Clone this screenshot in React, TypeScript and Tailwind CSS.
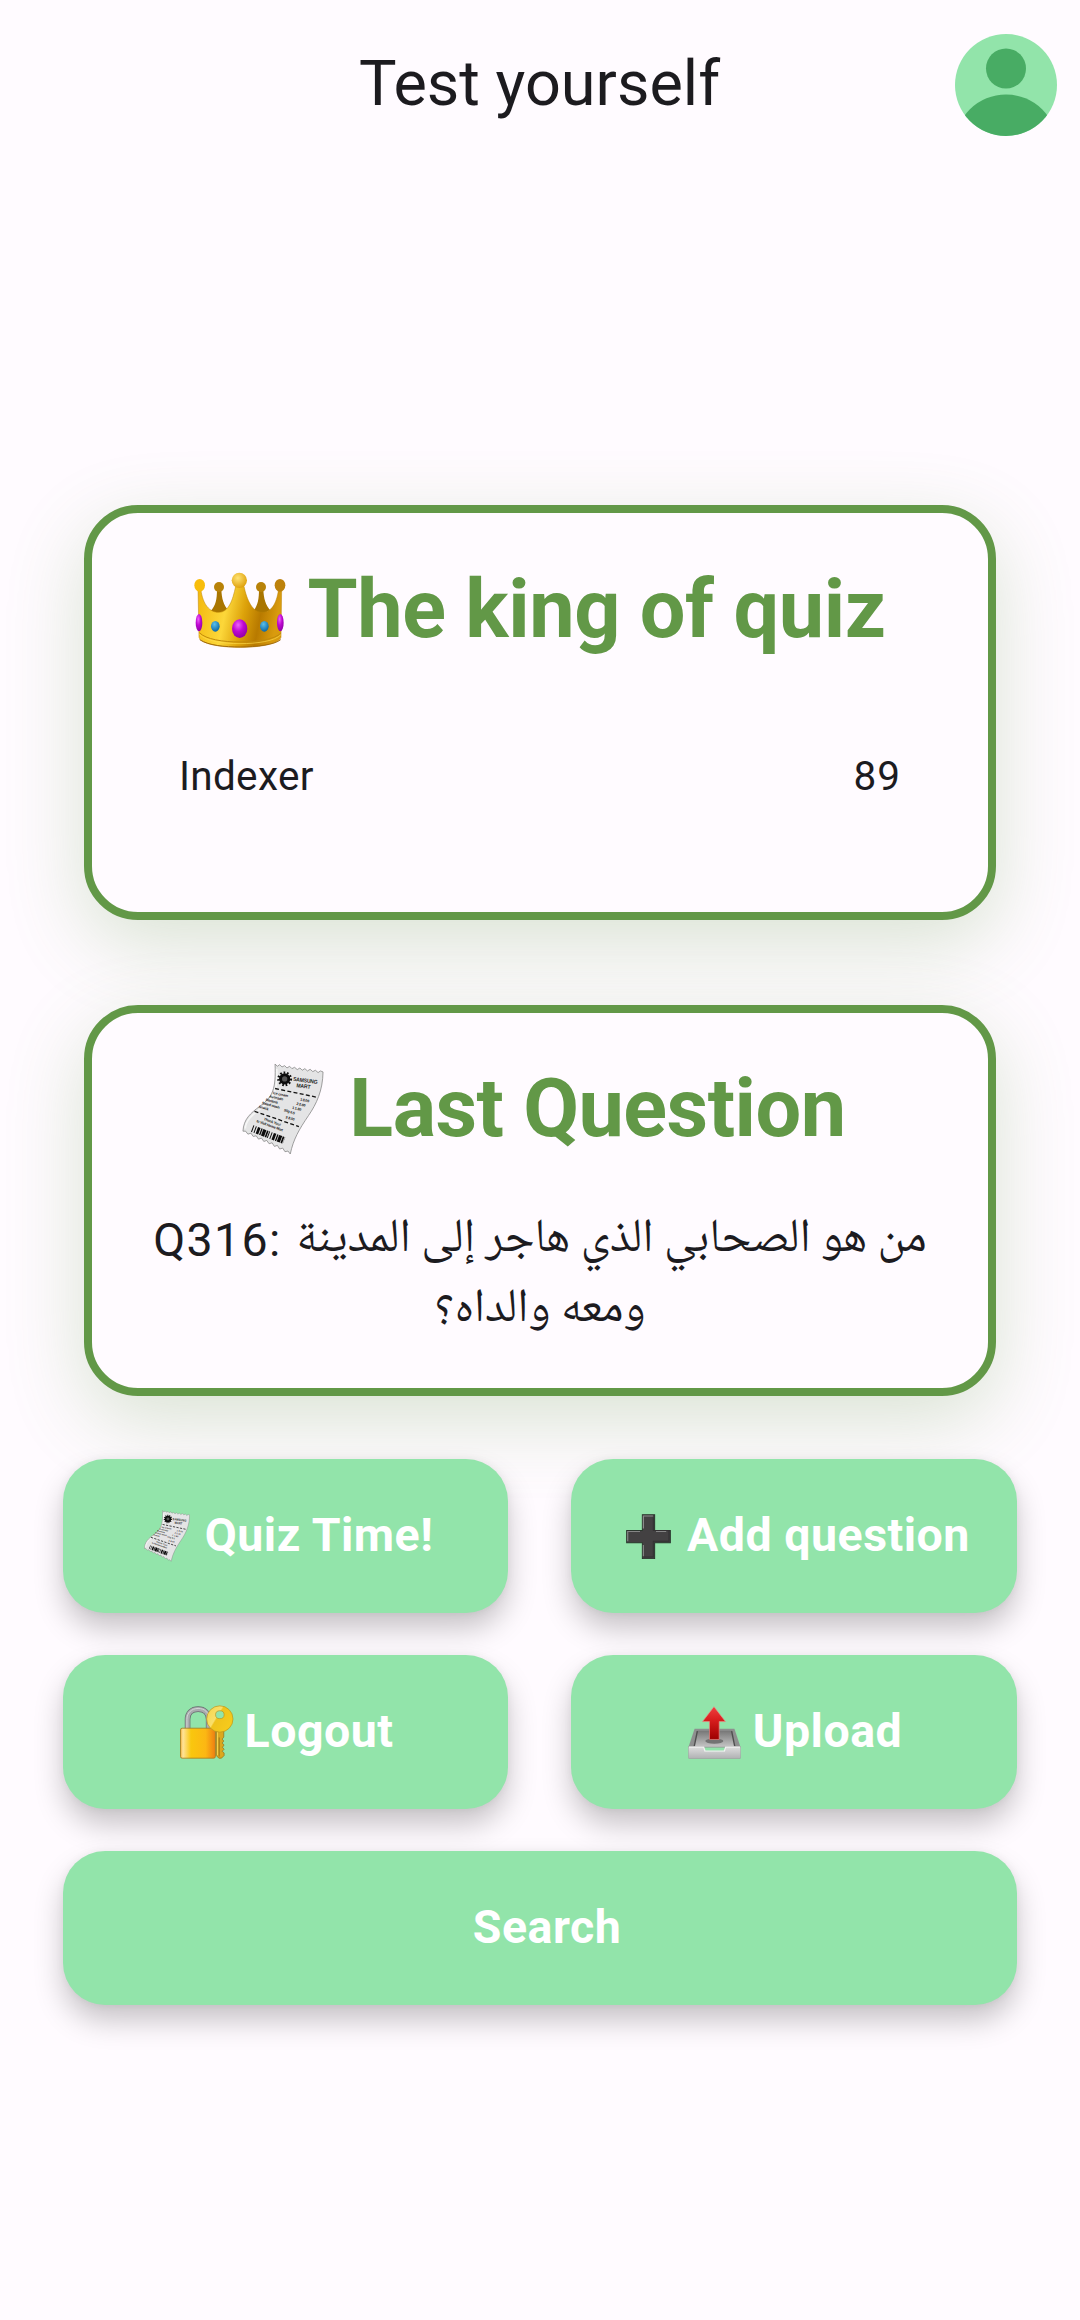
import type { ReactNode } from 'react';

function Avatar() {
  return (
    <svg viewBox="0 0 102 102" className="h-[102px] w-[102px]">
      <defs>
        <clipPath id="avatar-clip">
          <circle cx="51" cy="51" r="51" />
        </clipPath>
      </defs>
      <circle cx="51" cy="51" r="51" fill="#92e4aa" />
      <g clipPath="url(#avatar-clip)" fill="#48ac64">
        <circle cx="51" cy="34.5" r="20" />
        <ellipse cx="51" cy="111" rx="51" ry="50.5" />
      </g>
    </svg>
  );
}

function Crown() {
  return (
    <svg viewBox="47 66 276 228" className="h-[76px] w-[92px] shrink-0">
      <defs>
        <linearGradient id="crown-body" x1="0" y1="0" x2="1" y2="0.15">
          <stop offset="0" stopColor="#f3b70c" />
          <stop offset="0.38" stopColor="#fcd73a" />
          <stop offset="0.6" stopColor="#dda20a" />
          <stop offset="0.8" stopColor="#b87a00" />
          <stop offset="1" stopColor="#d99b0e" />
        </linearGradient>
        <radialGradient id="crown-ball" cx="0.4" cy="0.35" r="0.7">
          <stop offset="0" stopColor="#ffe374" />
          <stop offset="1" stopColor="#dd9d06" />
        </radialGradient>
        <radialGradient id="crown-purple" cx="0.4" cy="0.3" r="0.7">
          <stop offset="0" stopColor="#ef62fb" />
          <stop offset="0.5" stopColor="#be08d2" />
          <stop offset="1" stopColor="#9300a8" />
        </radialGradient>
        <radialGradient id="crown-blue" cx="0.4" cy="0.3" r="0.7">
          <stop offset="0" stopColor="#5cc0e8" />
          <stop offset="1" stopColor="#0b68a8" />
        </radialGradient>
      </defs>
      <path d="M116 118h13c1 28 7 48 20 62l-24 14-28-11c15-15 19-35 19-65ZM242 118h13c1 28 7 48 20 62l-22 14-28-11c13-15 17-35 17-65Z" fill="#a97500" />
      <circle cx="122" cy="111" r="15" fill="#b88209" />
      <circle cx="248" cy="111" r="15" fill="#b88209" />
      <path d="M59 114h8c4 38 20 73 54 73 30 0 42-36 51-78h25c9 42 25 78 55 78 31 0 45-35 49-73h9l-2 148c-6 19-57 30-123 30-65 0-117-11-123-30Z" fill="url(#crown-body)" stroke="#bb8205" strokeWidth="1.5" />
      <path d="M63 248c20 20 70 28 122 28s105-8 123-27" fill="none" stroke="#c18a0a" strokeWidth="3" />
      <path d="M63 253c20 20 70 28 122 28s105-8 123-27" fill="none" stroke="#ffdc4c" strokeWidth="2" />
      <path d="M64 269c25 17 75 22 122 22s103-7 121-22" fill="none" stroke="#a36b0a" strokeWidth="3" />
      <ellipse cx="64" cy="106" rx="16" ry="19" fill="#f8bd0b" />
      <ellipse cx="305" cy="106" rx="16" ry="19" fill="#bd810b" />
      <circle cx="183" cy="91" r="23" fill="url(#crown-ball)" />
      <ellipse cx="62" cy="218" rx="10" ry="26" fill="url(#crown-purple)" />
      <ellipse cx="306" cy="218" rx="10" ry="26" fill="url(#crown-purple)" />
      <ellipse cx="184" cy="236" rx="23" ry="28" fill="url(#crown-purple)" />
      <ellipse cx="111" cy="229" rx="13" ry="16" fill="url(#crown-blue)" />
      <ellipse cx="258" cy="229" rx="13" ry="16" fill="url(#crown-blue)" />
    </svg>
  );
}

function Receipt({ className }: { className: string }) {
  return (
    <svg viewBox="68 66 246 278" className={className}>
      <path
        d="M167 69L174 76L181 71L188 78L196 74L203 81L211 76L218 83L226 79L234 86L242 81L249 88L257 83L265 90L273 85L281 92L289 88L297 95L304 90L312 93C311 150 292 190 268 225C240 266 222 297 213 341L206 332L197 334L190 323L181 326L174 315L165 318L158 307L149 310L142 300L133 303L126 293L117 296L110 286L101 288L94 278L85 281L78 272L70 272C72 236 92 218 122 196C160 168 170 145 167 69Z"
        fill="#e4e4e5"
        stroke="#8b8b8b"
        strokeWidth="2.5"
      />
      <path d="M172 84C176 145 163 172 128 200C96 224 78 240 77 264" fill="none" stroke="#f6f6f6" strokeWidth="5" />
      <circle cx="196" cy="114" r="17" fill="#0c0c0c" />
      <circle cx="196" cy="114" r="19" fill="none" stroke="#0c0c0c" strokeWidth="7" strokeDasharray="5 5.5" />
      <circle cx="196" cy="114" r="8" fill="#555" />
      <g fill="#1d1d1d" fontFamily="Liberation Sans, sans-serif">
        <text transform="translate(221 120) rotate(7)" fontSize="17" textLength="74" lengthAdjust="spacingAndGlyphs">SAMSUNG</text>
        <text transform="translate(231 139) rotate(7)" fontSize="17" textLength="42" lengthAdjust="spacingAndGlyphs">MART</text>
        <g fontSize="11">
          <text transform="translate(160 160) rotate(11)">Ice cream</text>
          <text transform="translate(149 170) rotate(13)">Avocado</text>
          <text transform="translate(138 180) rotate(14)">Banana</text>
          <text transform="translate(127 190) rotate(15)">Salad wash</text>
          <text transform="translate(117 201) rotate(16)">Snack</text>
          <text transform="translate(242 179) rotate(13)">1 8.00</text>
          <text transform="translate(231 192) rotate(13)">2 2.00</text>
          <text transform="translate(218 204) rotate(14)">1 1.80</text>
          <text transform="translate(193 212) rotate(16)">50g 6.5</text>
          <text transform="translate(198 233) rotate(16)">3 8.00</text>
          <text transform="translate(132 238) rotate(20)">Thank You!</text>
          <text transform="translate(110 244) rotate(20)" textLength="84">to Visit Home Mart</text>
        </g>
      </g>
      <path d="M167 143l124 26" stroke="#111" strokeWidth="4" strokeDasharray="12 7" />
      <path d="M105 212l134 46" stroke="#111" strokeWidth="4" strokeDasharray="12 7" />
      <path d="M98 264l96 36" stroke="#0c0c0c" strokeWidth="21" strokeDasharray="3 5 3 4 8 3 4 2 10 2 5 2" />
    </svg>
  );
}

function Plus() {
  return (
    <svg viewBox="249 218 132 136" preserveAspectRatio="none" className="h-[45px] w-[45px] shrink-0">
      <path d="M297 220h36v48h46v37h-46v48h-36v-48h-46v-37h46Z" fill="#434142" stroke="#2a362d" strokeWidth="3" />
      <path d="M300 262v-38h28" fill="none" stroke="#8d8d8d" strokeWidth="3.5" />
      <path d="M254 300v-29h36M300 346v-34M337 271h30" fill="none" stroke="#858585" strokeWidth="3.5" />
      <path d="M329 228v40h46v32h-46v48h-28" fill="none" stroke="#333132" strokeWidth="3" />
    </svg>
  );
}

function LockWithKey() {
  return (
    <svg viewBox="417 192 164 163" className="h-[54px] w-[54px] shrink-0">
      <defs>
        <linearGradient id="lock-body" x1="0" x2="1">
          <stop offset="0" stopColor="#f2b03a" />
          <stop offset="0.07" stopColor="#ffe39a" />
          <stop offset="0.3" stopColor="#f9c70e" />
          <stop offset="0.72" stopColor="#fcb713" />
          <stop offset="1" stopColor="#ee7e12" />
        </linearGradient>
        <linearGradient id="key-head" x1="0" y1="0" x2="1" y2="0.6">
          <stop offset="0" stopColor="#f7d445" />
          <stop offset="0.45" stopColor="#f9df6b" />
          <stop offset="0.5" stopColor="#efc21c" />
          <stop offset="1" stopColor="#f6cb1c" />
        </linearGradient>
      </defs>
      <path d="M440 264v-29c0-20 14-31 32-31s32 11 32 31v29" fill="none" stroke="#666b6d" strokeWidth="17" />
      <path d="M440 264v-29c0-20 14-31 32-31s32 11 32 31v29" fill="none" stroke="#a9abae" strokeWidth="13" />
      <path d="M438 264v-29c0-20 14-33 34-33s32 11 32 31" fill="none" stroke="#d3d4d6" strokeWidth="3" />
      <rect x="418.500" y="262" width="106" height="91" rx="5" fill="url(#lock-body)" stroke="#a67c20" strokeWidth="2.500" />
      <path d="M527 266h23v23l-5 6 5 6-5 6 6 6-5 7 5 6-6 6 6 5v8l-8 8h-8l-8-8Z" fill="#dca71d" stroke="#8d6a17" strokeWidth="2" />
      <path d="M536 290v58" stroke="#8d6a17" strokeWidth="2.500" />
      <path d="M531 274v70" stroke="#f7d54e" strokeWidth="3" />
      <path fillRule="evenodd" d="M538 194a40 40 0 1 1 0 80 40 40 0 0 1 0-80Zm0 15a13 12 0 1 0 0 24 13 12 0 0 0 0-24Z" fill="url(#key-head)" stroke="#b5911c" strokeWidth="2" />
    </svg>
  );
}

function OutboxTray() {
  return (
    <svg viewBox="429 195 153 160" preserveAspectRatio="none" className="h-[53px] w-[53px] shrink-0">
      <defs>
        <linearGradient id="tray-inner" x1="0" y1="0" x2="0" y2="1">
          <stop offset="0" stopColor="#777" />
          <stop offset="1" stopColor="#c4c4c4" />
        </linearGradient>
        <linearGradient id="tray-front" x1="0" y1="0" x2="0" y2="1">
          <stop offset="0" stopColor="#dedede" />
          <stop offset="1" stopColor="#b0b1b3" />
        </linearGradient>
        <linearGradient id="tray-arrow" x1="0" y1="0" x2="0" y2="1">
          <stop offset="0" stopColor="#ee4140" />
          <stop offset="0.4" stopColor="#d81e1e" />
          <stop offset="1" stopColor="#9d0000" />
        </linearGradient>
      </defs>
      <path d="M448 264h115l18 56h-151Z" fill="#8e8f8f" />
      <path d="M455 270h101l9 48h-119Z" fill="url(#tray-inner)" />
      <path d="M456 271l-9 46M555 271l9 46" stroke="#4e4e4e" strokeWidth="4" />
      <ellipse cx="505" cy="301" rx="26" ry="8" fill="#737373" />
      <path d="M430 318h44l4 14h56l4-14h43v33q0 3-4 3h-143q-4 0-4-3Z" fill="url(#tray-front)" stroke="#969898" strokeWidth="1.500" />
      <path d="M432 319h42l4 12h56l4-12h41" fill="none" stroke="#f2f2f2" strokeWidth="4" />
      <path d="M504 197l33 45h-18v54h-28v-54h-20Z" fill="url(#tray-arrow)" stroke="#e98b85" strokeWidth="2" />
    </svg>
  );
}

function Card({ className, children }: { className: string; children: ReactNode }) {
  return (
    <section
      className={`mx-[84px] rounded-[54px] border-8 border-[#629847] bg-[#fffbff] shadow-[0_24px_78px_rgba(98,153,71,0.24)] ${className}`}
    >
      {children}
    </section>
  );
}

function Heading({ className, icon, children }: { className: string; icon: ReactNode; children: ReactNode }) {
  return (
    <h2
      className={`flex h-24 items-center justify-center text-[81px] leading-[96px] font-bold whitespace-nowrap text-[#629847] ${className}`}
    >
      {icon}
      <span>{children}</span>
    </h2>
  );
}

function ActionButton({ className = '', icon, children }: { className?: string; icon?: ReactNode; children: ReactNode }) {
  return (
    <button
      className={`flex h-[154px] items-center justify-center rounded-[42px] bg-[#92e4aa] text-[46.5px] font-bold tracking-[0.5px] whitespace-nowrap text-white shadow-[0_16px_30px_-1px_rgba(0,0,0,0.23),0_0_8px_rgba(0,0,0,0.05)] ${className}`}
    >
      {icon}
      <span>{children}</span>
    </button>
  );
}

export default function App() {
  return (
    <div className="flex h-[2320px] w-[1080px] flex-col overflow-hidden bg-[#fffbff] font-['Roboto',sans-serif] text-[#1c1b1f]">
      <header className="grid h-[169px] grid-cols-[1fr_auto_1fr] items-center pr-[23px] pl-[22px]">
        <span />
        <h1 className="pb-0.5 text-[63px] leading-[74px]">Test yourself</h1>
        <div className="flex justify-end">
          <Avatar />
        </div>
      </header>

      <main className="flex flex-col pt-[336px]">
        <Card className="h-[415px] pt-[49px]">
          <Heading className="gap-[21px] tracking-[-0.4px]" icon={<Crown />}>The king of quiz</Heading>
          <div className="mt-[88px] flex h-[60px] items-center justify-between px-[87px] text-[40.5px]">
            <span className="tracking-[0.3px]">Indexer</span>
            <span className="tracking-[1px]">89</span>
          </div>
        </Card>

        <Card className="mt-[85px] h-[391px] pt-12">
          <Heading
            className="gap-[25px] pl-2 tracking-[-0.5px]"
            icon={<Receipt className="h-[92px] w-[82px] shrink-0" />}
          >
            Last Question
          </Heading>
          <div className="mt-[49px] flex flex-col items-center">
            <div className="flex h-[70px] items-center gap-[15px] whitespace-nowrap">
              <span className="text-[46.5px] tracking-[1.3px]">Q316:</span>
              <span dir="rtl" className="font-['Noto_Naskh_Arabic',sans-serif] text-[47.2px] leading-[70px]">
                من هو الصحابي الذي هاجر إلى المدينة
              </span>
            </div>
            <span dir="rtl" className="font-['Noto_Naskh_Arabic',sans-serif] text-[47.2px] leading-[70px]">
              ومعه والداه؟
            </span>
          </div>
        </Card>

        <div className="mt-[63px] grid grid-cols-[445px_446px] gap-x-[63px] gap-y-[42px] px-[63px]">
          <ActionButton className="gap-[15px] pl-[6px]" icon={<Receipt className="h-[52px] w-[46px] shrink-0" />}>
            Quiz Time!
          </ActionButton>
          <ActionButton className="gap-4 pl-2" icon={<Plus />}>Add question</ActionButton>
          <ActionButton className="gap-[11px] pl-0.5" icon={<LockWithKey />}>Logout</ActionButton>
          <ActionButton className="gap-3 pl-0.5" icon={<OutboxTray />}>Upload</ActionButton>
          <ActionButton className="col-span-2 pl-[14px]">Search</ActionButton>
        </div>
      </main>
    </div>
  );
}
